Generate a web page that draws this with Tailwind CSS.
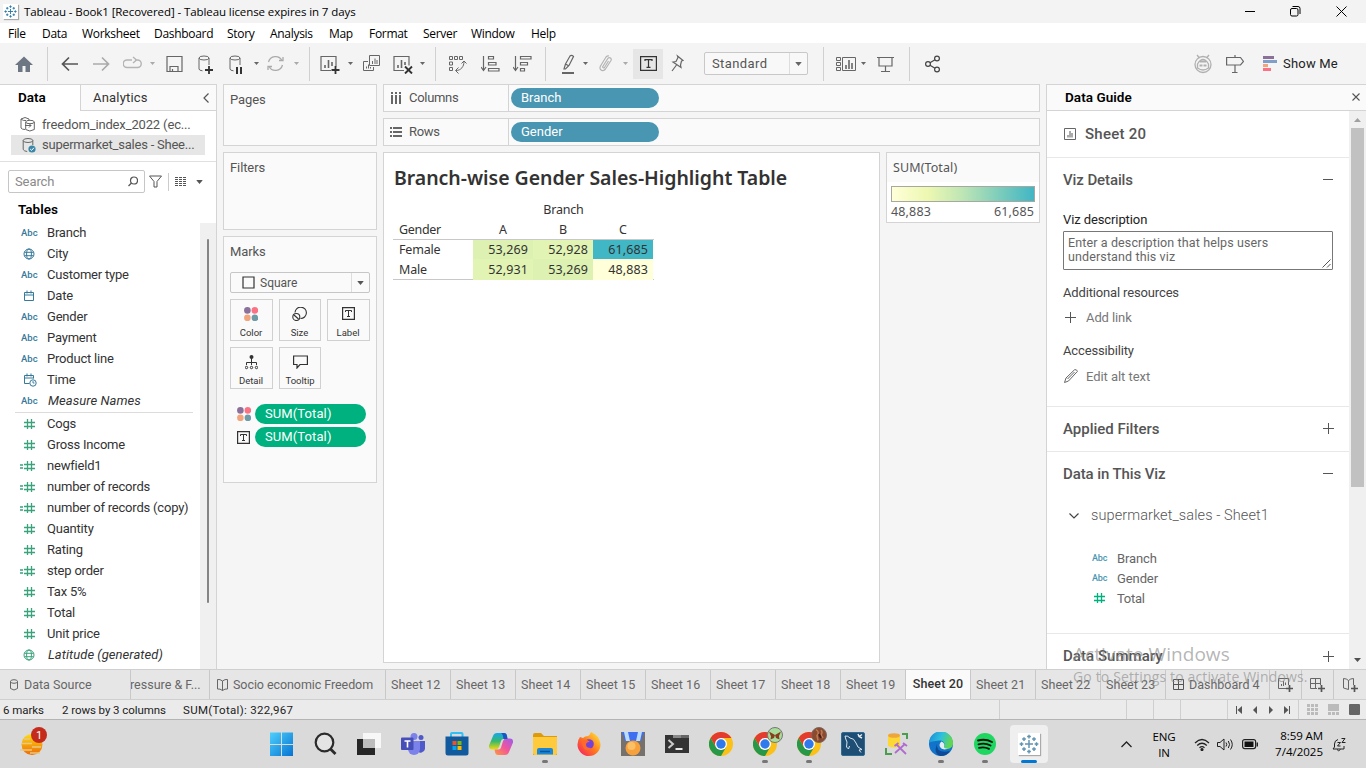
<!DOCTYPE html>
<html lang="en">
<head>
<meta charset="utf-8">
<title>Tableau - Book1</title>
<script src="https://cdn.jsdelivr.net/npm/@tailwindcss/browser@4"></script>
</head>
<body class="w-[1366px] h-[768px] overflow-hidden bg-[#f5f5f5] font-['Roboto','Liberation_Sans',sans-serif] text-[13px] leading-none text-[#333] relative flex flex-col">

<!-- shared symbols -->
<svg class="hidden">
  <symbol id="hash" viewBox="0 0 12 12"><path d="M4.500 1v10M8.500 1v10M1 4.500h11M1 8.500h11" fill="none" stroke="currentColor" stroke-width="1.300"/></symbol>
  <symbol id="eqhash" viewBox="0 0 16 12"><path d="M7.500 1v10M11.500 1v10M4 4.500h11M4 8.500h11M0 5h3M0 8h3" fill="none" stroke="currentColor" stroke-width="1.300"/></symbol>
  <symbol id="globe" viewBox="0 0 12 12"><g fill="none" stroke="currentColor"><circle cx="6" cy="6" r="5"/><ellipse cx="6" cy="6" rx="2.400" ry="5"/><path d="M1.500 4.300h9M1.500 7.700h9"/></g></symbol>
  <symbol id="cal" viewBox="0 0 12 12"><path d="M1.500 2.500h9v8h-9zM1.500 5h9M4 .5v3M8 .5v3" fill="none" stroke="currentColor"/></symbol>
  <symbol id="caltime" viewBox="0 0 14 14"><path d="M6.500 10.500h-5v-8h9v3M1.500 5h9M4 .5v3M8 .5v3" fill="none" stroke="currentColor"/><circle cx="10" cy="10" r="3.200" fill="none" stroke="currentColor"/><path d="M10 8v2h1.500" fill="none" stroke="currentColor" stroke-width=".9"/></symbol>
  <symbol id="dots" viewBox="0 0 14 14"><circle cx="3.400" cy="3.400" r="3.300" fill="#8b7199"/><circle cx="10.900" cy="3.400" r="3.300" fill="#fb7285"/><circle cx="3.400" cy="10.900" r="3.300" fill="#f2a47c"/><circle cx="10.900" cy="10.900" r="3.300" fill="#6f9aa8"/></symbol>
  <symbol id="tbox" viewBox="0 0 13 13"><path d="M.6.6h11.800v11.800H.6z" fill="none" stroke="#333" stroke-width="1.200"/><path d="M3.500 5V3.500h6V5M6.500 3.500v6M5 9.500h3" fill="none" stroke="#333"/></symbol>
  <symbol id="caret" viewBox="0 0 5 3"><path d="M0 0h5L2.500 3z" fill="currentColor"/></symbol>
  <symbol id="tableau" viewBox="0 0 16 16"><path d="M8 4.800v6.400M4.800 8h6.400M8 .5v3M6.500 2h3M8 12.500v3M6.500 14h3M.5 8h3M2 6.500v3M12.500 8h3M14 6.500v3M4 2.500v3M2.500 4h3M12 2.500v3M10.500 4h3M4 10.500v3M2.500 12h3M12 10.500v3M10.500 12h3" fill="none" stroke="currentColor" stroke-width="1.150"/></symbol>
  <symbol id="chrome" viewBox="0 0 24 24"><circle cx="12" cy="12" r="12" fill="#fbc116"/><path d="M12 12 6.800 15 1.600 6A12 12 0 0 1 22.400 6H12z" fill="#e33b2e"/><path d="M1.600 6 6.800 15 12 18l5.200-3L12 24A12 12 0 0 1 1.600 6z" fill="#279847"/><circle cx="12" cy="12" r="6" fill="#fff"/><circle cx="12" cy="12" r="4.700" fill="#3079ec"/></symbol>
</svg>

<!-- title bar -->
<header class="h-[23px] shrink-0 bg-[#f3f3f3] flex items-center pl-[3px] text-black font-['Open_Sans','Noto_Sans',sans-serif]">
  <div class="size-[15px] bg-white shadow-[1px_1px_1px_#aaa] text-[#2b7ba8] flex items-center justify-center"><svg class="size-[13px]"><use href="#tableau"/></svg></div>
  <span class="ml-[6px] text-[11.5px] tracking-[-0.09px] whitespace-nowrap">Tableau - Book1 [Recovered] - Tableau license expires in 7 days</span>
  <svg class="ml-auto w-[10px] h-[11px]"><path d="M0 5.500h10" stroke="#000"/></svg>
  <svg class="ml-[35px] w-[11px] h-[11px]" fill="none" stroke="#000"><rect x=".5" y="2.500" width="7.500" height="7.500" rx="1.500"/><path d="M2.500.500h5.500a2 2 0 0 1 2 2v5.500"/></svg>
  <svg class="ml-[35px] mr-[19px] w-[11px] h-[11px]"><path d="M.5.500l10 10M10.500.500l-10 10" stroke="#000"/></svg>
</header>

<!-- menu bar -->
<nav class="h-[20px] shrink-0 bg-white flex items-center pt-[2px] text-black text-[12px] tracking-[-0.3px] font-['Open_Sans','Noto_Sans',sans-serif] whitespace-nowrap">
  <span class="ml-[8px] w-[34px]">File</span><span class="w-[40px]">Data</span><span class="w-[72px]">Worksheet</span><span class="w-[73px]">Dashboard</span><span class="w-[43px]">Story</span><span class="w-[59px]">Analysis</span><span class="w-[40px]">Map</span><span class="w-[54px]">Format</span><span class="w-[48px]">Server</span><span class="w-[60px]">Window</span><span>Help</span>
</nav>

<!-- toolbar -->
<div class="h-[41px] shrink-0 bg-[#f4f4f4] flex items-center text-[#666] pl-[15px]">
  <svg class="w-[18px] h-[21px]"><path d="M9 3.500 18 12h-3v7h-4.500v-6h-3v6H3v-7H0z" fill="#6d7784"/></svg>
  <i class="ml-[14px] w-px h-[34px] bg-[#d0d0d0]"></i>
  <svg class="ml-[13px] w-[17px] h-[21px]" fill="none" stroke="#555" stroke-width="1.700"><path d="M17 11H1.500M8 4.500 1.500 11 8 17.500"/></svg>
  <svg class="ml-[15px] w-[17px] h-[21px]" fill="none" stroke="#aaa" stroke-width="1.700"><path d="M0 11h15.500M9 4.500l6.500 6.500L9 17.500"/></svg>
  <svg class="ml-[13px] w-[19px] h-[21px]" fill="none" stroke="#b4b4b4" stroke-width="1.400"><path d="M9 7H4a3.500 3.500 0 0 0 0 7.500h10.500A3.500 3.500 0 0 0 14.500 7H12M10 4l3.500 3-3.500 3"/></svg>
  <svg class="ml-[8px] w-[5px] h-[3px] text-[#aaa]"><use href="#caret"/></svg>
  <svg class="ml-[11px] w-[17px] h-[21px]" fill="none" stroke="#666" stroke-width="1.200"><path d="M1 3.500h15v15H1zM4 18v-4.500h8V18M6.500 18v-2"/></svg>
  <svg class="ml-[15px] w-[15px] h-[21px]" fill="none" stroke="#666"><ellipse cx="6" cy="5" rx="5" ry="2"/><path d="M1 5v11q0 1.500 3.500 1.800M11 5v7"/><path d="M11 13v8M7 17h8" stroke="#333" stroke-width="1.800"/></svg>
  <svg class="ml-[15px] w-[15px] h-[21px]" fill="none" stroke="#666"><ellipse cx="7" cy="5" rx="5" ry="2"/><path d="M2 5v11q0 1.500 3.500 1.800M12 5v7"/><path d="M9 14v7M13 14v7" stroke="#333" stroke-width="2"/></svg>
  <svg class="ml-[11px] w-[5px] h-[3px]"><use href="#caret"/></svg>
  <svg class="ml-[8px] w-[17px] h-[21px]" fill="none" stroke="#aaa" stroke-width="1.300"><path d="M1.500 9A7.300 7.300 0 0 1 15 7.500M15.500 12A7.300 7.300 0 0 1 2 13.500M12 7.500h4V4M5 13.500H1V17"/></svg>
  <svg class="ml-[10px] w-[5px] h-[3px] text-[#aaa]"><use href="#caret"/></svg>
  <i class="ml-[10px] w-px h-[34px] bg-[#d0d0d0]"></i>
  <svg class="ml-[10px] w-[20px] h-[21px]" fill="none" stroke="#666" stroke-width="1.200"><path d="M11 17.500H1v-14h15v10"/><path d="M5 15v-3M8.500 15V7M12 13V9" stroke-width="1.600"/><path d="M15.500 13v8M11.500 17h8" stroke="#333" stroke-width="1.800"/></svg>
  <svg class="ml-[8px] w-[5px] h-[3px]"><use href="#caret"/></svg>
  <svg class="ml-[10px] w-[18px] h-[21px]" fill="none" stroke="#666"><path d="M6.500 2.500h10v10h-10zM5 8.500H.5v9h10V14M9.500 11V8M12 11V5.500M14 11V7M3.500 15.500v-2M5.500 15.500v-4M7.500 15.500V14"/></svg>
  <svg class="ml-[12px] w-[20px] h-[21px]" fill="none" stroke="#666" stroke-width="1.200"><path d="M11 17.500H1v-14h15v9"/><path d="M5 15v-3M8.500 15V7M12 12V9" stroke-width="1.600"/><path d="M12 13.500l7 7M19 13.500l-7 7" stroke="#333" stroke-width="1.900"/></svg>
  <svg class="ml-[7px] w-[5px] h-[3px]"><use href="#caret"/></svg>
  <i class="ml-[10px] w-px h-[34px] bg-[#d0d0d0]"></i>
  <svg class="ml-[12px] w-[19px] h-[21px]" fill="none" stroke="#666"><path d="M1.500 3.500h3v3h-3zM6.500 3.500h3v3h-3zM11.500 3.500h3v3h-3zM1.500 9h3v3h-3zM1.500 14.500h3v3h-3zM16 8.500c0 5-3 9-8 9M13.500 10.500l2.500-2.500 2.500 2.500M10.500 14.500l-3 3 3 3"/></svg>
  <svg class="ml-[14px] w-[19px] h-[21px]" fill="none" stroke="#666" stroke-width="1.200"><path d="M2.500 3v14M0 14l2.500 3.500L5 14M7.500 3.500h5V6h-5zM7.500 9.500H15V12H7.500zM7.500 15.500H18V18H7.500z"/></svg>
  <svg class="ml-[13px] w-[19px] h-[21px]" fill="none" stroke="#666" stroke-width="1.200"><path d="M2.500 3v14M0 14l2.500 3.500L5 14M7.500 3.500H18V6H7.500zM7.500 9.500h7V12h-7zM7.500 15.500h4V18h-4z"/></svg>
  <i class="ml-[13px] w-px h-[34px] bg-[#d0d0d0]"></i>
  <svg class="ml-[15px] w-[14px] h-[21px]" fill="none" stroke="#666" stroke-width="1.200"><path d="M4.500 11 9 3q1.500-1.500 3.500.5L8 12.500 4.500 16H3zM4.500 11l3.500 2"/><path d="M1 20h12" stroke-width="2"/></svg>
  <svg class="ml-[8px] w-[5px] h-[3px]"><use href="#caret"/></svg>
  <svg class="ml-[11px] w-[13px] h-[21px]" fill="none" stroke="#b4b4b4" stroke-width="1.200"><path d="M9.500 8 5.500 14.500q-1 1-2-.5l5-8q1.500-2.500 3.500-.5.500 1 0 2L6.500 16q-2.500 3-5 .5-1-1.500 0-3.500l5.500-9q1.500-1.500 3-1"/></svg>
  <svg class="ml-[11px] w-[5px] h-[3px] text-[#aaa]"><use href="#caret"/></svg>
  <div class="ml-[5px] size-[30px] bg-[#e6e6e6] flex items-center justify-center"><svg class="w-[17px] h-[15px]" fill="none" stroke="#333" stroke-width="1.200"><path d="M.6.600h15.800v13.800H.6zM5 5V3.700h7V5M8.500 3.700v7.600M6.500 11.300h4"/></svg></div>
  <svg class="ml-[8px] w-[13px] h-[21px]" fill="none" stroke="#666" stroke-width="1.200"><path d="M6.500 3 12 7.500l-1.500.5-1 4 .5 2.500L2 9l3-.5 2-4zM5.500 12 1 18"/></svg>
  <div class="ml-[20px] w-[104px] h-[23px] border border-[#c8c8c8] rounded-[2px] bg-[#f8f8f8] flex items-center"><span class="ml-[7px] text-[13px] tracking-[0.4px] text-[#555]">Standard</span><i class="ml-auto w-px h-full bg-[#ddd]"></i><svg class="mx-[5px] w-[7px] h-[4px]" viewBox="0 0 5 3"><use href="#caret"/></svg></div>
  <i class="ml-[15px] w-px h-[34px] bg-[#d0d0d0]"></i>
  <svg class="ml-[12px] w-[21px] h-[21px]" fill="none" stroke="#666"><path d="M.5 4.500h4v3h-4zM.5 9.500h4v3h-4zM.5 14.500h4v3h-4zM6.500 4.500h13v13h-13z"/><path d="M10 16v-4M13 16V7M16 16v-6" stroke-width="1.600"/></svg>
  <svg class="ml-[4px] w-[5px] h-[3px]"><use href="#caret"/></svg>
  <svg class="ml-[11px] w-[17px] h-[21px]" fill="none" stroke="#666" stroke-width="1.200"><path d="M0 4.500h17M2 4.500V13h13V4.500M8.500 13v5M4 18.500h9"/></svg>
  <i class="ml-[15px] w-px h-[34px] bg-[#d0d0d0]"></i>
  <svg class="ml-[15px] w-[16px] h-[21px]" fill="none" stroke="#444" stroke-width="1.200"><circle cx="3" cy="11" r="2.400"/><circle cx="12" cy="5.500" r="2.400"/><circle cx="12" cy="16.500" r="2.400"/><path d="M5 9.800l5-3M5 12.200l5 3"/></svg>
  <svg class="ml-auto w-[18px] h-[21px]" fill="none" stroke="#b0b0b0" stroke-width="1.300"><circle cx="9" cy="11.500" r="8"/><path d="M3 2l2.500 3M15 2l-2.500 3M3.500 11Q9 2 14.500 11V15q-5.500 4-11 0z"/><path d="M5.500 12.500h3M9.500 12.500h3M6 8.500h6" stroke-width="2.200"/></svg>
  <svg class="ml-[14px] w-[18px] h-[21px]" fill="none" stroke="#666" stroke-width="1.200"><path d="M.6 4.500H14.500L17.500 8.500 14.500 12H.6zM9 2v2.500M9 12v7M6 19.500h5.500"/></svg>
  <svg class="ml-[19px] w-[14px] h-[21px]"><path d="M0 3h11v3H0z" fill="#8b7199"/><path d="M0 7h14v3H0z" fill="#7f9fc9"/><path d="M0 11h5v3H0z" fill="#f2a47c"/><path d="M0 15h8v3H0z" fill="#fb7285"/></svg>
  <span class="ml-[6px] mr-[28px] w-[55px] text-[13px] tracking-[0.2px] text-[#222] whitespace-nowrap">Show Me</span>
</div>

<!-- workspace -->
<main class="h-[585px] shrink-0 flex">
  <!-- data pane -->
  <aside class="w-[217px] bg-white border-r border-t border-[#d4d4d4] flex flex-col">
    <div class="h-[26px] shrink-0 flex">
      <div class="w-[80px] flex items-center pl-[18px] pb-[1px] text-[13.500px] text-black font-semibold">Data</div>
      <div class="flex-1 bg-[#fafafa] border-l border-b border-[#d4d4d4] flex items-center pl-[12px] tracking-[0.2px]">Analytics<svg class="ml-auto mr-[7px] w-[6px] h-[10px]" fill="none" stroke="#555" stroke-width="1.200"><path d="M5.500.500 1 5l4.500 4.500"/></svg></div>
    </div>
    <div class="mt-[4px] h-[20px] shrink-0 flex items-center pb-[2px] pl-[20px] text-[#555] tracking-[-0.15px] whitespace-nowrap"><svg class="w-[15px] h-[16px] mr-[7px]" fill="none" stroke="#666"><path d="M1 3q4-3 8 0v1M1 3v9q1 1.500 4 1.500M1 3q2 2 5 1.500"/><ellipse cx="10" cy="6" rx="4.300" ry="1.700"/><path d="M5.700 6v7.500q4 3 8.600 0V6M5 9.500h6M9 7.500l2 2-2 2"/></svg>freedom_index_2022 (ec...</div>
    <div class="ml-[11px] w-[194px] h-[20px] shrink-0 bg-[#e6e6e6] flex items-center pb-px pl-[11px] text-[#555] tracking-[-0.22px] whitespace-nowrap"><svg class="w-[14px] h-[16px] mr-[6px]" fill="none" stroke="#666"><ellipse cx="6" cy="3.500" rx="4.800" ry="2"/><path d="M1.200 3.500v9q1 1.800 4 2M10.800 3.500V8"/><circle cx="10" cy="12" r="3.600" fill="#3b87a8" stroke="none"/><path d="M8.200 12l1.400 1.400 2.300-2.600" stroke="#fff"/></svg>supermarket_sales - Shee...</div>
    <div class="mt-[6px] h-px shrink-0 bg-[#e0e0e0]"></div>
    <div class="mt-[8px] ml-[8px] h-[23px] shrink-0 flex items-center">
      <div class="w-[137px] h-full border border-[#c6c6c6] rounded-[2px] flex items-center justify-between px-[6px] text-[#8a8a8a] tracking-[-0.1px]">Search<svg class="w-[10px] h-[11px]" fill="none" stroke="#555" stroke-width="1.200"><circle cx="6" cy="4.500" r="3.500"/><path d="M3.500 7 .5 10"/></svg></div>
      <svg class="ml-[4px] w-[13px] h-[13px]" fill="none" stroke="#555"><path d="M.5 1h12L8 6.500V12H5V6.500z"/></svg>
      <i class="ml-[6px] w-px h-[18px] bg-[#ccc]"></i>
      <svg class="ml-[6px] w-[12px] h-[11px]" stroke="#555" stroke-dasharray="3 1"><path d="M0 1.500h12M0 3.500h12M0 5.500h12M0 7.500h12M0 9.500h12"/></svg>
      <svg class="ml-[9px] w-[7px] h-[4px] text-[#555]" viewBox="0 0 5 3"><use href="#caret"/></svg>
    </div>
    <div class="mt-[10px] h-[14px] shrink-0 pl-[18px] text-[13.500px] font-semibold text-black">Tables</div>
    <div class="mt-[6px] flex-1 flex min-h-0">
      <div class="w-[200px] -mt-px tracking-[-0.2px]" id="fields"></div>
      <div class="flex-1 bg-[#f0f0f0] flex justify-center pt-[16px]"><i class="w-[2px] h-[364px] bg-[#858585] rounded-full"></i></div>
    </div>
  </aside>

  <!-- shelves: pages, filters, marks -->
  <section class="ml-[6px] w-[154px] flex flex-col gap-[6px] text-[#555]">
    <div class="h-[62px] border border-[#d4d4d4] bg-[#fafafa] pl-[6px] pt-[8px] tracking-[-0.1px]">Pages</div>
    <div class="h-[78px] border border-[#d4d4d4] bg-[#fafafa] pl-[6px] pt-[8px] tracking-[-0.1px]">Filters</div>
    <div class="h-[247px] border border-[#d4d4d4] bg-[#fafafa] px-[6px] pt-[8px]">
      <div class="tracking-[-0.1px]">Marks</div>
      <div class="mt-[14px] w-[140px] h-[21px] border border-[#c6c6c6] rounded-[2px] flex items-center"><svg class="ml-[11px] w-[13px] h-[13px]"><path d="M1 1h11v11H1z" fill="none" stroke="#333" stroke-width="1.200"/></svg><span class="ml-[5px] pt-px text-[12px]">Square</span><i class="ml-auto w-px h-full bg-[#ddd]"></i><svg class="mx-[5px] w-[7px] h-[4px]" viewBox="0 0 5 3"><use href="#caret"/></svg></div>
      <div class="mt-[6px] grid grid-cols-[43px_42px_43px] gap-[6px] text-[9.500px] text-[#333] w-[140px]">
        <div class="h-[42px] border border-[#d0d0d0] flex flex-col items-center pt-[7px] pr-px"><svg class="size-[14px]"><use href="#dots"/></svg><span class="mt-[7px]">Color</span></div>
        <div class="h-[42px] border border-[#d0d0d0] flex flex-col items-center pt-[7px] pr-px"><svg class="w-[15px] h-[14px]" fill="none" stroke="#333" stroke-width="1.100"><path d="M3 5.500A5.700 5.700 0 1 1 8.500 11.500"/><circle cx="4.300" cy="10" r="3.500"/><path d="M2 8l4.500 4"/></svg><span class="mt-[7px]">Size</span></div>
        <div class="h-[42px] border border-[#d0d0d0] flex flex-col items-center pt-[7px] pr-px"><svg class="size-[13px]"><use href="#tbox"/></svg><span class="mt-[8px]">Label</span></div>
        <div class="h-[42px] border border-[#d0d0d0] flex flex-col items-center pt-[7px] pr-px"><svg class="w-[13px] h-[15px]" fill="none" stroke="#333"><circle cx="6.500" cy="2" r="2" fill="#333" stroke="none"/><path d="M6.500 2v8M1.500 10V7.500h10V10"/><circle cx="1.500" cy="12.500" r="1.200"/><circle cx="6.500" cy="12.500" r="1.200"/><circle cx="11.500" cy="12.500" r="1.200"/></svg><span class="mt-[6px]">Detail</span></div>
        <div class="h-[42px] border border-[#d0d0d0] flex flex-col items-center pt-[7px]"><svg class="w-[15px] h-[14px]" fill="none" stroke="#333" stroke-width="1.200"><path d="M.6 1h13.800v8.500H7L4 13V9.500H.6z"/></svg><span class="mt-[7px]">Tooltip</span></div>
      </div>
      <div class="mt-[15px] pl-[7px] flex items-center h-[20px]"><svg class="size-[14px]"><use href="#dots"/></svg><div class="ml-[4px] w-[111px] h-[20px] rounded-full bg-[#00b180] text-white flex items-center pl-[10px] pb-px tracking-[0.1px]">SUM(Total)</div></div>
      <div class="mt-[3px] pl-[7px] flex items-center h-[20px]"><svg class="size-[13px]"><use href="#tbox"/></svg><div class="ml-[5px] w-[111px] h-[20px] rounded-full bg-[#00b180] text-white flex items-center pl-[10px] pb-px tracking-[0.1px]">SUM(Total)</div></div>
    </div>
  </section>

  <!-- columns / rows shelves and view -->
  <section class="ml-[6px] w-[657px] flex flex-col gap-[6px]">
    <div class="h-[28px] shrink-0 border border-[#d4d4d4] bg-[#fafafa] flex items-center text-[#555]">
      <div class="w-[125px] h-full border-r border-[#d4d4d4] flex items-center pl-[6px] pb-px tracking-[-0.3px]"><svg class="w-[12px] h-[12px] mr-[7px]" fill="#666"><path d="M1 0h2v2H1zM5 0h2v2H5zM9 0h2v2H9zM1 3h2v9H1zM5 3h2v9H5zM9 3h2v9H9z"/></svg>Columns</div>
      <div class="ml-[2px] w-[148px] h-[20px] rounded-full bg-[#4996b2] text-white flex items-center pl-[10px] pb-px">Branch</div>
    </div>
    <div class="h-[28px] shrink-0 border border-[#d4d4d4] bg-[#fafafa] flex items-center text-[#555]">
      <div class="w-[125px] h-full border-r border-[#d4d4d4] flex items-center pl-[6px] pb-px tracking-[-0.3px]"><svg class="w-[12px] h-[12px] mr-[7px]" fill="#666"><path d="M0 1h2v2H0zM0 5h2v2H0zM0 9h2v2H0zM3 1h9v2H3zM3 5h9v2H3zM3 9h9v2H3z"/></svg>Rows</div>
      <div class="ml-[2px] w-[148px] h-[20px] rounded-full bg-[#4996b2] text-white flex items-center pl-[10px] pb-px">Gender</div>
    </div>
    <div class="flex gap-[6px] items-start">
      <div class="w-[497px] h-[511px] bg-white border border-[#d4d4d4] pl-[9px] pt-[14px] font-['Noto_Sans',sans-serif]">
        <h1 class="pl-px h-[22px] leading-[22px] text-[19.500px] font-semibold tracking-[-0.04px] text-[#333] whitespace-nowrap">Branch-wise Gender Sales-Highlight Table</h1>
        <div class="mt-[11px] w-[261px] text-[12.500px] tracking-[0.1px]">
          <div class="h-[20px] leading-[20px] ml-[80px] w-[181px] text-center tracking-[-0.2px]">Branch</div>
          <div class="h-[20px] leading-[20px] grid grid-cols-[80px_60px_60px_60px] border-b border-[#c8c8c8] text-center"><span class="text-left pl-[6px] tracking-[-0.3px]">Gender</span><span>A</span><span>B</span><span>C</span></div>
          <div class="h-[19px] leading-[20px] grid grid-cols-[80px_60px_60px_60px] text-right"><span class="text-left pl-[6px] tracking-[-0.2px]">Female</span><span class="bg-[#dcf1b2] pr-[5px]">53,269</span><span class="bg-[#e2f4b4] pr-[5px]">52,928</span><span class="bg-[#41b6c4] pr-[5px]">61,685</span></div>
          <div class="h-[21px] leading-[21px] grid grid-cols-[80px_60px_60px_60px] border-b border-[#c8c8c8] text-right"><span class="text-left pl-[6px] tracking-[-0.2px]">Male</span><span class="bg-[#e2f4b4] pr-[5px]">52,931</span><span class="bg-[#dcf1b2] pr-[5px]">53,269</span><span class="bg-[#ffffd9] pr-[5px]">48,883</span></div>
        </div>
      </div>
      <div class="w-[154px] h-[71px] border border-[#d4d4d4] bg-white text-[#555] font-['Noto_Sans',sans-serif] text-[12.500px]">
        <div class="h-[29px] bg-[#fafafa] pl-[6px] leading-[30px] tracking-[0.1px]">SUM(Total)</div>
        <div class="mt-[4px] ml-[4px] w-[144px] h-[16px] border border-[#a8a8a0] bg-[linear-gradient(90deg,#ffffd9,#edf8b1_25%,#bde5b5_50%,#7ecdbb_75%,#41b6c4)]"></div>
        <div class="pl-[4px] pr-[5px] h-[20px] leading-[19px] tracking-[0.15px] flex justify-between">
          <span>48,883</span><span>61,685</span></div>
      </div>
    </div>
  </section>

  <!-- data guide -->
  <aside class="ml-[6px] w-[320px] border-l border-t border-[#d4d4d4] bg-white flex flex-col text-[#444]">
    <div class="h-[26px] shrink-0 bg-[#fafafa] border-b border-[#d4d4d4] flex items-center pl-[18px] text-black text-[13.500px] font-semibold tracking-[0.05px]">Data Guide<svg class="ml-auto mr-[6px] mb-px w-[8px] h-[8px]"><path d="M.5.500l7 7M7.500.500l-7 7" stroke="#555" stroke-width="1.100"/></svg></div>
    <div class="flex-1 min-h-0 flex">
      <div class="w-[302px] overflow-hidden">
        <div class="h-[47px] border-b border-[#e8e8e8] flex items-center pl-[17px] text-[15px] text-[#555] tracking-[0.25px] font-medium"><svg class="w-[12px] h-[12px] mr-[9px]"><path d="M.5.500h11v11H.5z" fill="none" stroke="#666"/><path d="M3 9.500V7h2V3h2v2h2v4.500z" fill="#aaa"/></svg>Sheet 20</div>
        <div class="h-[249px] border-b border-[#e8e8e8] px-[16px] pt-[14px] text-[#444]">
          <div class="h-[16px] flex items-center justify-between text-[15px] text-[#555] font-medium tracking-[-0.1px]">Viz Details<svg class="w-[10px] h-px -mt-px"><path d="M0 .5h10" stroke="#555"/></svg></div>
          <div class="mt-[25px] h-[14px] tracking-[-0.1px] text-[#222]">Viz description</div>
          <div class="mt-[4px] w-[270px] h-[39px] border border-[#777] rounded-[1px] pl-[4px] pt-[4px] leading-[14px] text-[12.500px] text-[#666] tracking-[0.12px] relative">Enter a description that helps users<br>understand this viz<svg class="absolute right-[1px] bottom-[1px] w-[9px] h-[9px]"><path d="M.5 8.500l8-8M5 8.500 8.500 5" stroke="#555"/></svg></div>
          <div class="mt-[16px] h-[13px] tracking-[-0.15px]">Additional resources</div>
          <div class="mt-[11px] h-[14px] flex items-center text-[#777] tracking-[-0.1px]"><svg class="ml-[2px] w-[11px] h-[11px] mr-[10px]"><path d="M0 5.500h11M5.500 0v11" stroke="#555"/></svg>Add link</div>
          <div class="mt-[20px] h-[13px] tracking-[-0.15px]">Accessibility</div>
          <div class="mt-[12px] h-[14px] flex items-center text-[#777] tracking-[-0.05px]"><svg class="ml-[1px] w-[14px] h-[14px] mr-[8px]" fill="none" stroke="#666"><path d="M.5 13.500 2 9 10.500.800q2-.8 3 1.500L4.500 12zM3.500 10l7-7"/></svg>Edit alt text</div>
        </div>
        <div class="h-[45px] border-b border-[#e8e8e8] px-[16px] flex items-center justify-between text-[15px] text-[#555] font-medium">Applied Filters<svg class="w-[11px] h-[11px] mr-[-1px] mb-px"><path d="M0 5.500h11M5.500 0v11" stroke="#555"/></svg></div>
        <div class="h-[182px] border-b border-[#e8e8e8] px-[16px] pt-[14px]">
          <div class="h-[16px] flex items-center justify-between text-[15px] text-[#555] font-medium tracking-[-0.1px]">Data in This Viz<svg class="w-[10px] h-px -mt-px"><path d="M0 .5h10" stroke="#555"/></svg></div>
          <div class="mt-[26px] h-[16px] flex items-center pl-[6px] text-[14.500px] text-[#555] font-light tracking-[0.1px]"><svg class="w-[10px] h-[6px] mr-[12px]"><path d="M.5.500 5 5 9.500.500" fill="none" stroke="#444" stroke-width="1.200"/></svg>supermarket_sales - Sheet1</div>
          <div class="mt-[24px] h-[20px] flex items-center pl-[29px] text-[#666] tracking-[-0.1px]"><span class="w-[25px] text-[9px] text-[#4996b2] font-medium">Abc</span>Branch</div>
          <div class="h-[20px] flex items-center pl-[29px] text-[#666] tracking-[-0.1px]"><span class="w-[25px] text-[9px] text-[#4996b2] font-medium">Abc</span>Gender</div>
          <div class="h-[20px] flex items-center pl-[29px] text-[#666] tracking-[-0.3px]"><span class="w-[25px] text-[#00b180]"><svg class="ml-px size-[12px]"><use href="#hash"/></svg></span>Total</div>
        </div>
        <div class="h-[45px] px-[16px] flex items-center justify-between text-[15px] text-[#555] font-medium tracking-[0.05px]">Data Summary<svg class="w-[11px] h-[11px] mr-[-1px] mb-px"><path d="M0 5.500h11M5.500 0v11" stroke="#555"/></svg></div>
      </div>
      <div class="flex-1 bg-[#f0f0f0] flex flex-col items-center">
        <svg class="mt-[7px] w-[7px] h-[4px]"><path d="M0 4h7L3.500 0z" fill="#a0a0a0"/></svg>
        <i class="mt-[6px] w-[13px] h-[359px] bg-[#c1c1c1]"></i>
        <svg class="mt-auto mb-[7px] w-[7px] h-[4px]"><path d="M0 0h7L3.500 4z" fill="#505050"/></svg>
      </div>
    </div>
  </aside>
</main>

<!-- sheet tabs -->
<div class="h-[31px] shrink-0 border-t border-b border-[#cfcfcf] bg-[#e6e6e6] flex text-[#666] text-[12.500px] whitespace-nowrap" id="tabs"></div>

<!-- status bar -->
<div class="h-[20px] shrink-0 bg-[#ebebeb] border-b border-[#b4b4b4] flex items-center text-[11.500px] text-[#222]">
  <span class="ml-[3px] mt-[2px] w-[59px] tracking-[-0.05px]">6 marks</span><span class="mt-[2px] w-[121px] tracking-[-0.07px]">2 rows by 3 columns</span><span class="mt-[2px] tracking-[0.3px]">SUM(Total): 322,967</span>
  <div class="ml-auto h-full flex">
    <i class="w-[127px] border-l border-[#cfcfcf]"></i><i class="w-[27px] border-l border-[#cfcfcf]"></i><i class="w-[27px] border-l border-[#cfcfcf]"></i><i class="w-[47px] border-l border-[#cfcfcf]"></i>
    <div class="w-[71px] border-l border-[#cfcfcf] flex items-center pl-[8px] gap-[11px]"><svg class="w-[6px] h-[8px]" fill="#555"><path d="M0 0h1v8H0zM6 0v8L1.500 4z"/></svg><svg class="w-[4px] h-[8px]" fill="#555"><path d="M4 0v8L0 4z"/></svg><svg class="w-[4px] h-[8px] ml-px" fill="#555"><path d="M0 0v8l4-4z"/></svg><svg class="w-[6px] h-[8px]" fill="#555"><path d="M5 0h1v8H5zM0 0v8l4.500-4z"/></svg></div>
    <div class="w-[68px] border-l border-[#cfcfcf] flex items-center pl-[8px]"><svg class="w-[11px] h-[11px]" fill="#bbb"><path d="M0 0h3v3H0zM4 0h3v3H4zM8 0h3v3H8zM0 4h3v3H0zM4 4h3v3H4zM8 4h3v3H8zM0 8h3v3H0zM4 8h3v3H4zM8 8h3v3H8z"/></svg><svg class="ml-[10px] w-[11px] h-[11px]" fill="#bbb"><path d="M0 0h11v7H0zM0 8h3v3H0zM4 8h3v3H4zM8 8h3v3H8z"/></svg><i class="ml-[10px] size-[11px] bg-[#666] rounded-[1px]"></i></div>
  </div>
</div>

<!-- Windows taskbar -->
<footer class="flex-1 bg-[#dadada] flex items-center relative">
  <div class="ml-[20px] w-[30px] h-[30px] relative">
    <svg class="absolute left-0 top-[4px] w-[24px] h-[23px]"><defs><linearGradient id="sun" x1="0" y1="0" x2="0" y2="1"><stop offset="0" stop-color="#fddc10"/><stop offset="1" stop-color="#ee6a08"/></linearGradient></defs><circle cx="12" cy="11.500" r="10.500" fill="url(#sun)"/><path d="M2 10.500h10M12 14h9M0 17h12M10 20h10M4 6h6" stroke="#e8c982" stroke-width="1.500"/></svg>
    <div class="absolute left-[11px] top-[-2px] size-[16px] rounded-full bg-[#c42b1c] text-white text-[11px] flex items-center justify-center">1</div>
  </div>
  <div class="ml-[209px] flex h-full">
    <div class="w-[44px] flex items-center justify-center"><svg class="size-[24px]"><defs><linearGradient id="win" x1="0" y1="0" x2="1" y2="1"><stop offset="0" stop-color="#4fd0fc"/><stop offset="1" stop-color="#0673d2"/></linearGradient></defs><path d="M1 .500h11V12H1zM13 .500h11V12H13zM1 13h11v11H1zM13 13h11v11H13z" fill="url(#win)"/></svg></div>
    <div class="w-[44px] flex items-center justify-center"><svg class="size-[24px]" fill="none" stroke="#2b2b2b"><circle cx="11.500" cy="10.500" r="8.800" stroke-width="2.200" fill="#e4e4e4"/><path d="M17.500 17l5 5" stroke-width="2.800"/></svg></div>
    <div class="w-[44px] flex items-center justify-center"><svg class="size-[24px]"><path d="M0 7h18v16H0z" fill="#262626"/><path d="M6 1h18v15H6z" fill="#f7f7f7"/><path d="M6 7h12v9H6z" fill="#bcbcbc"/></svg></div>
    <div class="w-[44px] flex items-center justify-center"><svg class="size-[24px]"><circle cx="13" cy="4.500" r="3.500" fill="#7b83eb"/><circle cx="20" cy="5.500" r="2.500" fill="#5059c9"/><path d="M15 9h9v8a4.500 4.500 0 0 1-8 2z" fill="#5059c9"/><path d="M7 9h12v8a6 6 0 0 1-12 0z" fill="#7b83eb"/><rect y="5.500" width="12.500" height="12.500" rx="1" fill="#464eb8"/><path d="M3.500 9h6M6.500 9v6.500" stroke="#fff" stroke-width="1.600"/></svg></div>
    <div class="w-[44px] flex items-center justify-center"><svg class="size-[24px]"><path d="M6 6V2q0-1 1-1h9.500q1 0 1 1v4" fill="none" stroke="#2fc0f5" stroke-width="2"/><path d="M.5 4.500h23V21q0 2.500-2.500 2.500H3Q.5 23.500.5 21z" fill="#125a9e"/><path d="M7.500 9h4v4h-4z" fill="#f25022"/><path d="M12.500 9h4v4h-4z" fill="#7fba00"/><path d="M7.500 14h4v4h-4z" fill="#00a4ef"/><path d="M12.500 14h4v4h-4z" fill="#ffb900"/></svg></div>
    <div class="w-[44px] flex items-center justify-center"><svg class="size-[24px]"><defs><linearGradient id="cp1" x1="0" y1="0" x2="0" y2="1"><stop offset="0" stop-color="#16a7ee"/><stop offset=".5" stop-color="#37b96c"/><stop offset="1" stop-color="#f6d90c"/></linearGradient><linearGradient id="cp2" x1="1" y1="0" x2="0" y2="1"><stop offset="0" stop-color="#9a5cf0"/><stop offset=".5" stop-color="#f1569b"/><stop offset="1" stop-color="#ff9a3c"/></linearGradient></defs><path d="M8 1h7q2.500 0 3 3l.5 3h-4q-2 0-2.500 2L10 15q-.8 2.500-3 2.500H3q-3.500 0-3-4L4 4q1-3 4-3z" fill="url(#cp1)"/><path d="M16 23H9q-2.500 0-3-3l-.5-2.500h4q2 0 2.500-2L14 9q.8-2.500 3-2.500h4q3.500 0 3 4L20 20q-1 3-4 3z" fill="url(#cp2)"/><path d="M12 1h3q2.500 0 3 3l.5 3h-4q-.5-5-2.500-6z" fill="#1b54c4"/></svg></div>
    <div class="w-[44px] flex items-center justify-center relative"><svg class="size-[24px]"><path d="M0 3q0-2 2-2h6l3 3H24v19H0z" fill="#dd9b0c"/><path d="M0 5h24v16q0 2-2 2H2q-2 0-2-2z" fill="#ffcb3d"/><path d="M4 22.500V18q0-2 2-2h12q2 0 2 2v4.500z" fill="#1b87d6"/><path d="M7 19.500h10" stroke="#0b569b" stroke-width="1.500"/></svg><i class="absolute bottom-[5px] w-[6px] h-[3px] rounded-full bg-[#777]"></i></div>
    <div class="w-[44px] flex items-center justify-center"><svg class="size-[24px]"><defs><linearGradient id="fx" x1="1" y1="0" x2="0" y2="1"><stop offset="0" stop-color="#fff13f"/><stop offset=".5" stop-color="#ff7a1c"/><stop offset="1" stop-color="#f5156c"/></linearGradient></defs><path d="M3 5l3 1q2-2 5-2 2-1 3-4 8 3 9.500 12A11.500 11.500 0 0 1 12 24 11.500 11.500 0 0 1 .5 12.500Q.5 8 3 5z" fill="url(#fx)"/><circle cx="12" cy="12" r="4.800" fill="#7542d8"/><path d="M5 9q4-3 8 1-4-.5-4 3 0 3 5 3-2 3.500-6 1.500-3-2-3-8.500z" fill="#ff6a2c"/></svg></div>
    <div class="w-[44px] flex items-center justify-center"><svg class="size-[24px]"><path d="M0 0h24v24H0z" fill="#77716d"/><path d="M1 0h22L20 9H4z" fill="#3f6ff0"/><path d="M3 0h4l2 9H5zM17 0h4l-2 9h-4z" fill="#bcdcff"/><circle cx="12" cy="16" r="7.500" fill="#f6a13b"/><circle cx="10.500" cy="14" r="4" fill="#fbbf66"/></svg></div>
    <div class="w-[44px] flex items-center justify-center"><svg class="size-[24px]"><path d="M0 3h24v18H0z" fill="#343434"/><path d="M8 3h8v3H8z" fill="#888"/><path d="M16 3h8v3h-8z" fill="#666"/><path d="M3.500 8l4.500 4-4.500 4" fill="none" stroke="#ccc" stroke-width="2"/><path d="M10.500 17h7" stroke="#fff" stroke-width="1.800"/></svg></div>
    <div class="w-[44px] flex items-center justify-center"><svg class="size-[24px]"><use href="#chrome"/></svg></div>
    <div class="w-[44px] flex items-center justify-center relative"><svg class="size-[24px]"><use href="#chrome"/></svg><svg class="absolute left-[24px] top-[7px] size-[16px]"><circle cx="8" cy="8" r="7.500" fill="#a6dd9a" stroke="#777"/><path d="M8 8 2 4.500 4 9.500l-.5 3L7 11l1-3 1 3 3.500 1.500L12 9l2-4.500z" fill="#8a3d1d"/></svg><i class="absolute bottom-[5px] w-[6px] h-[3px] rounded-full bg-[#777]"></i></div>
    <div class="w-[44px] flex items-center justify-center relative"><svg class="size-[24px]"><use href="#chrome"/></svg><svg class="absolute left-[24px] top-[7px] size-[16px]"><circle cx="8" cy="8" r="7.500" fill="#8a4a30" stroke="#7b6a60"/><path d="M5 2.500q4 3 1 6l1 5M10 3q2 2 0 5l2 3" fill="none" stroke="#c07a52" stroke-width="1.500"/><path d="M8 7l2 4" stroke="#43201a" stroke-width="2"/></svg><i class="absolute bottom-[5px] w-[6px] h-[3px] rounded-full bg-[#777]"></i></div>
    <div class="w-[44px] flex items-center justify-center"><svg class="size-[24px]"><rect x=".5" y=".5" width="23" height="23" rx="1.500" fill="#1f4e74" stroke="#2d6a96"/><path d="M4 4q3-.5 5 2 4 0 6 5l2 4 4 2.500-3 .5 2 2.500M4 4q.5 3 2 6l-.5 5 2 2 1-3" fill="none" stroke="#d6e6f2"/><path d="M17 2l1 2.500 3 1.500M21 2.500 18 4.500" fill="none" stroke="#e8f0f6" stroke-width="1.400"/></svg></div>
    <div class="w-[44px] flex items-center justify-center"><svg class="size-[24px]"><path d="M3 3h12v11q-6 3-12 0z" fill="#fdd835"/><ellipse cx="9" cy="3.500" rx="6" ry="2.300" fill="#eda53c"/><path d="M17 2h5v5M1 16v6h6" fill="none" stroke="#4b9e50" stroke-width="2"/><path d="M10 21l10-9M11 12l10 10M9.500 14l4-3M18 11l4 3" fill="none" stroke="#b06bd0" stroke-width="1.800"/></svg></div>
    <div class="w-[44px] flex items-center justify-center relative"><svg class="size-[24px]"><defs><linearGradient id="ed" x1="0" y1="0" x2="1" y2=".3"><stop offset="0" stop-color="#1787d8"/><stop offset=".55" stop-color="#2fc0dc"/><stop offset="1" stop-color="#62d653"/></linearGradient></defs><circle cx="12" cy="12" r="12" fill="#1173c9"/><path d="M0 11A12 12 0 0 1 24 11.500c0 3.500-3 5.500-6.500 5.500-2.500 0-3.500-1-2.500-2.500 2-4-2-6.500-5-6-5 .5-8.500 1-10 2.500z" fill="url(#ed)"/><path d="M8 12q-1 10 13 7-3 5-9.500 5Q4 22 8 12z" fill="#0f4a96"/><path d="M12.500 9.500q4 2 2.500 5-.5 2 4 2.300-6 2-8-1.800-1.500-3 1.500-5.500z" fill="#e2ecf2"/></svg><i class="absolute bottom-[5px] w-[6px] h-[3px] rounded-full bg-[#777]"></i></div>
    <div class="w-[44px] flex items-center justify-center relative"><svg class="size-[24px]"><circle cx="12" cy="12" r="11" fill="#1ed760"/><path d="M5 8.500q7.500-2 14 1.500M5.500 12.300q6.500-1.800 12 1.200M6 15.800q5.500-1.300 10 1" fill="none" stroke="#111" stroke-width="1.900" stroke-linecap="round"/></svg><i class="absolute bottom-[5px] w-[6px] h-[3px] rounded-full bg-[#777]"></i></div>
    <div class="w-[44px] flex items-center justify-center relative"><div class="w-[38px] h-[38px] rounded-[4px] bg-[#efefef] flex items-center justify-center"><div class="size-[22px] bg-white shadow-[1px_1px_1px_#aaa] text-[#5f93b2] flex items-center justify-center"><svg class="size-[20px]"><use href="#tableau"/></svg></div></div><i class="absolute bottom-[5px] w-[16px] h-[3px] rounded-full bg-[#0078d4]"></i></div>
  </div>
  <div class="ml-auto mr-[20px] flex items-center text-black font-['Open_Sans','Noto_Sans',sans-serif] text-[11.500px]">
    <svg class="w-[11px] h-[7px]"><path d="M.5 6 5.500 1l5 5" fill="none" stroke="#222" stroke-width="1.300"/></svg>
    <div class="ml-[20px] mt-[2px] w-[24px] text-center leading-[16px] tracking-[-0.2px]">ENG<br>IN</div>
    <svg class="ml-[18px] w-[16px] h-[13px]" fill="none" stroke="#222" stroke-width="1.200"><path d="M1 5q7-7 14 0M3.200 7.500q4.800-4.500 9.600 0M5.500 9.800q2.500-2.200 5 0"/><circle cx="8" cy="11.500" r="1" fill="#222"/></svg>
    <svg class="ml-[7px] w-[17px] h-[13px]" fill="none" stroke="#222"><path d="M.5 4.500h2.500L7 1v11L3 8.500H.5zM9 4.500q1.500 2 0 4M11.300 3q2.500 3.500 0 7M13.500 1.500q3.500 5 0 10"/></svg>
    <svg class="ml-[8px] w-[16px] h-[11px]"><rect x=".6" y=".6" width="13" height="9" rx="2" fill="none" stroke="#222" stroke-width="1.200"/><path d="M2.500 2.500h9v5.500h-9z" fill="#111"/><path d="M15.300 3.500v4" stroke="#222" stroke-width="1.400"/></svg>
    <div class="ml-[15px] w-[50px] text-right leading-[16px] whitespace-nowrap flex flex-col items-end">
      <span class="tracking-[-0.1px]">8:59 AM</span><span>7/4/2025</span></div>
    <svg class="ml-[9px] w-[14px] h-[15px]" fill="none" stroke="#222"><path d="M6 2.500Q2.500 3.500 2.500 7v3L1 12h11V9M5 12.500q1.500 2.500 3.500 0M5.500 5.500h3L5.500 9h3M9.500 1.500h3.500l-3 4h3.500"/></svg>
  </div>
</footer>

<!-- activation watermark lying over the workspace -->
<div class="absolute left-[1073px] top-[643px] text-[#8c8c8c]/65 font-['Open_Sans','Noto_Sans',sans-serif] whitespace-nowrap">
  <div class="text-[19px] leading-[22px] tracking-[0.05px]">Activate Windows</div>
  <div class="mt-[4px] text-[14px] leading-[16px] tracking-[0.15px]">Go to Settings to activate Windows.</div>
</div>

<script>
const abc = '<span class="block w-[17px] text-[9.5px] font-medium tracking-normal text-[#37799a] pl-px">Abc</span>';
const ico = (id, cls) => `<svg class="${cls}"><use href="#${id}"/></svg>`;
const kinds = {
  abc,
  globe: ico('globe', 'w-[12px] h-[12px] ml-[3px] text-[#37799a]'),
  cal: ico('cal', 'w-[12px] h-[12px] ml-[3px] text-[#37799a]'),
  time: ico('caltime', 'w-[14px] h-[14px] ml-[3px] text-[#37799a]'),
  hash: ico('hash', 'w-[12px] h-[12px] ml-[3px] text-[#3ba37c]'),
  eq: ico('eqhash', 'w-[16px] h-[12px] text-[#3ba37c]'),
  geo: ico('globe', 'w-[12px] h-[12px] ml-[3px] text-[#3ba37c]')
};
const rows = [['abc','Branch'],['globe','City'],['abc','Customer type'],['cal','Date'],['abc','Gender'],['abc','Payment'],['abc','Product line'],['time','Time'],['abc','Measure Names',1],null,
 ['hash','Cogs'],['hash','Gross Income'],['eq','newfield1'],['eq','number of records'],['eq','number of records (copy)'],['hash','Quantity'],['hash','Rating'],['eq','step order'],['hash','Tax 5%'],['hash','Total'],['hash','Unit price'],['geo','Latitude (generated)',1]];
document.getElementById('fields').innerHTML = rows.map(r => r
  ? `<div class="h-[21px] flex items-center pl-[20px] whitespace-nowrap"><div class="w-[27px] shrink-0">${kinds[r[0]]}</div><span class="${r[2] ? 'italic tracking-[0.05px] pl-px' : ''}">${r[1]}</span></div>`
  : '<div class="ml-[15px] w-[178px] h-px bg-[#dcdcdc] mt-[1px]"></div>').join('');

const sheet = n => n === 20
  ? '<div class="w-[65px] shrink-0 border-r border-[#c8c8c8] bg-[#fafafa] text-[#333] font-medium flex items-center justify-center text-[12.5px] tracking-[0.15px]">Sheet 20</div>'
  : `<div class="w-[65px] shrink-0 border-r border-[#c8c8c8] flex items-center pt-[2px] pl-[5px] tracking-[0.05px]">Sheet ${n}</div>`;
document.getElementById('tabs').innerHTML =
  '<div class="w-[131px] shrink-0 border-r border-[#c8c8c8] flex items-center pt-[2px] pl-[10px]"><svg class="w-[8px] h-[12px] mr-[6px] mb-[2px]" fill="none" stroke="#666"><ellipse cx="4" cy="2.500" rx="3.500" ry="1.800"/><path d="M.5 2.500v7q3.500 3 7 0v-7"/></svg>Data Source</div>' +
  '<div class="w-[79px] shrink-0 border-r border-[#c8c8c8] flex items-center pt-[2px] overflow-hidden"><span class="-ml-px">ressure &amp; F...</span></div>' +
  '<div class="w-[176px] shrink-0 border-r border-[#c8c8c8] flex items-center pt-[2px] pl-[7px] tracking-[-0.07px]"><svg class="w-[11px] h-[13px] mr-[5px] mb-[2px]" fill="none" stroke="#666"><path d="M5.500 3v9.500M.5 1.500Q3 1 5.500 3 8 1 10.500 1.500v9.500Q8 10.500 5.500 12.500 3 10.500.5 11z"/></svg>Socio economic Freedom</div>' +
  [12,13,14,15,16,17,18,19,20,21,22,23].map(sheet).join('') +
  '<div class="w-[104px] shrink-0 border-r border-[#c8c8c8] flex items-center pt-[2px] pl-[7px]"><svg class="w-[11px] h-[11px] mr-[5px] mb-[2px]" fill="none" stroke="#555"><path d="M.5.500h10v10H.5zM.5 5.500h10M5.500.500v10"/></svg>Dashboard 4</div>' +
  '<div class="w-[32px] shrink-0 border-r border-[#c8c8c8] flex items-center justify-center"><svg class="w-[15px] h-[16px]" fill="none" stroke="#666"><path d="M8 11.500H.500v-10h10V8M3.500 9V7M5.500 9V4M7.500 8V5.500"/><path d="M11.500 8v7M8 11.500h7" stroke="#555" stroke-width="1.700"/></svg></div>' +
  '<div class="w-[32px] shrink-0 border-r border-[#c8c8c8] flex items-center justify-center"><svg class="w-[15px] h-[16px]" fill="none" stroke="#666"><path d="M7 11.500H.500v-10h10V8M.5 6.500h10M5.500 1.500v10"/><path d="M11.500 8v7M8 11.500h7" stroke="#555" stroke-width="1.700"/></svg></div>' +
  '<div class="w-[33px] shrink-0 flex items-center justify-center"><svg class="w-[15px] h-[16px]" fill="none" stroke="#666"><path d="M5.500 3.500v9L.5 11V1.500q3 0 5 2 2-2 5-2V8"/><path d="M11.500 8v7M8 11.500h7" stroke="#555" stroke-width="1.700"/></svg></div>';
</script>
</body>
</html>
